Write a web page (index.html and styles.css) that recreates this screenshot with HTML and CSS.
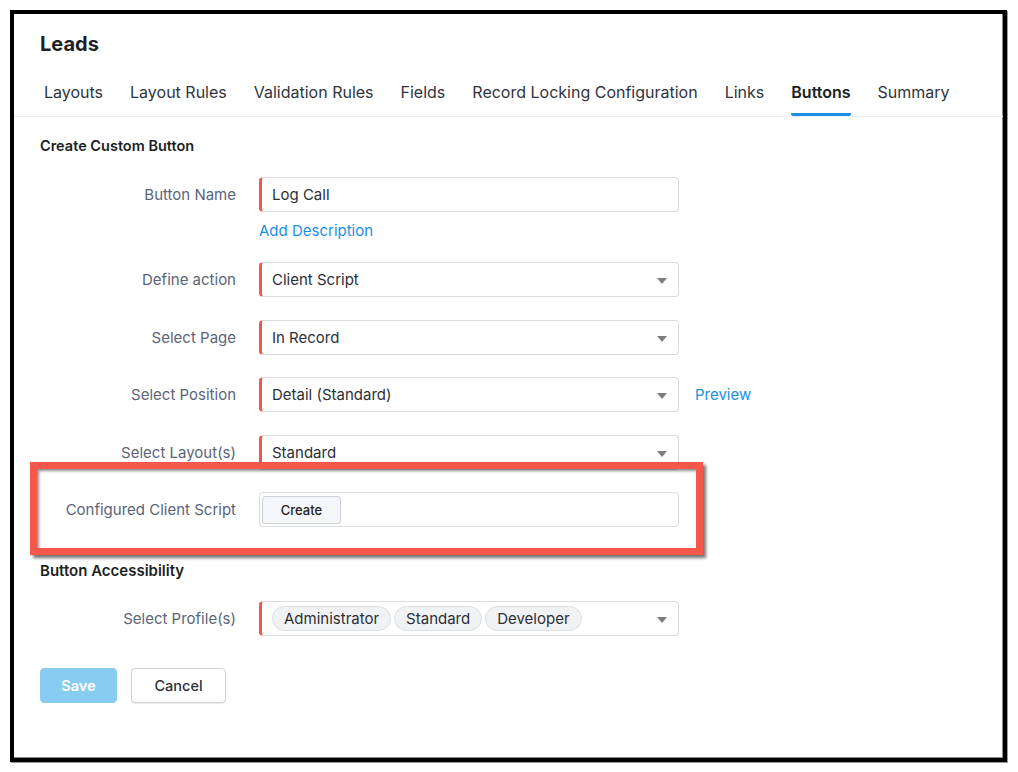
FILE: index.html
```html
<!DOCTYPE html>
<html lang="en">
<head>
    <meta charset="UTF-8">
    <title>Leads - Buttons</title>
    <link rel="stylesheet" href="styles.css">
</head>
<body>
<div class="frame">
    <h1 class="title">Leads</h1>
    <div class="tabs">
        <span class="tab">Layouts</span>
        <span class="tab">Layout Rules</span>
        <span class="tab">Validation Rules</span>
        <span class="tab">Fields</span>
        <span class="tab">Record Locking Configuration</span>
        <span class="tab">Links</span>
        <span class="tab active">Buttons</span>
        <span class="tab">Summary</span>
    </div>

    <div class="content">
        <h2 class="section-title">Create Custom Button</h2>

        <div class="row first">
            <label class="label">Button Name</label>
            <div class="field">
                <div class="input required">Log Call</div>
                <a class="link add-desc">Add Description</a>
            </div>
        </div>

        <div class="row">
            <label class="label">Define action</label>
            <div class="input required select">Client Script<span class="caret"></span></div>
        </div>

        <div class="row">
            <label class="label">Select Page</label>
            <div class="input required select">In Record<span class="caret"></span></div>
        </div>

        <div class="row">
            <label class="label">Select Position</label>
            <div class="input required select">Detail (Standard)<span class="caret"></span></div>
            <a class="link preview">Preview</a>
        </div>

        <div class="row">
            <label class="label">Select Layout(s)</label>
            <div class="input required select">Standard<span class="caret"></span></div>
        </div>

        <div class="row highlighted">
            <label class="label">Configured Client Script</label>
            <div class="input plain">
                <button class="btn-create">Create</button>
            </div>
            <div class="callout"></div>
        </div>

        <h2 class="section-title access">Button Accessibility</h2>

        <div class="row">
            <label class="label">Select Profile(s)</label>
            <div class="input required select chips">
                <span class="chip">Administrator</span>
                <span class="chip">Standard</span>
                <span class="chip">Developer</span>
                <span class="caret"></span>
            </div>
        </div>

        <div class="actions">
            <button class="btn save">Save</button>
            <button class="btn cancel">Cancel</button>
        </div>
    </div>
</div>
</body>
</html>
```

FILE: styles.css
```css
html, body {
    margin: 0;
    background: #ffffff;
    font-family: Inter, "Noto Sans", sans-serif;
}
.frame {
    margin: 10px;
    width: 997px;
    height: 752px;
    box-sizing: border-box;
    border: 4px solid #000;
    box-shadow: inset -1px -1px 0 #8a8a8a, 1px 1px 0 #9a9a9a;
    padding-top: 16px;
    overflow: hidden;
}
.title {
    margin: 0 0 24px 26px;
    font-size: 20px;
    line-height: 28px;
    font-weight: 700;
    color: #1d1f24;
}
.tabs {
    display: flex;
    gap: 27px;
    padding-left: 30px;
    border-bottom: 1px solid #eceef1;
}
.tab {
    font-size: 16px;
    line-height: 20px;
    color: #2f3440;
    padding-bottom: 11px;
    border-bottom: 3px solid transparent;
}
.tab.active {
    color: #1b1d22;
    font-weight: 600;
    border-bottom-color: #1a8fe3;
    border-radius: 2px;
}
.content {
    padding: 19px 26px 0;
}
.section-title {
    margin: 0 0 21px;
    font-size: 14.5px;
    line-height: 20px;
    font-weight: 600;
    color: #1d1f24;
}
.section-title.access {
    margin: 34px 0 20px;
    font-size: 15px;
}
.row {
    display: flex;
    align-items: center;
    margin-bottom: 22.5px;
}
.row.first {
    align-items: flex-start;
    margin-bottom: 21px;
}
.row.first .label {
    line-height: 35px;
}
.label {
    width: 196px;
    margin-right: 23px;
    text-align: right;
    font-size: 15px;
    color: #5b6479;
    flex-shrink: 0;
}
.field {
    display: flex;
    flex-direction: column;
}
.input {
    width: 420px;
    height: 35px;
    box-sizing: border-box;
    border: 1px solid #d8dadf;
    border-radius: 4px;
    display: flex;
    align-items: center;
    padding-left: 12px;
    font-size: 15px;
    color: #2c2f36;
    position: relative;
}
.input.required {
    border-left: 3px solid #f2574c;
    padding-left: 10px;
}
.input.plain {
    padding-left: 2px;
}
.caret {
    position: absolute;
    right: 11px;
    top: 15px;
    width: 0;
    height: 0;
    border-left: 5px solid transparent;
    border-right: 5px solid transparent;
    border-top: 6px solid #7b7d82;
}
.link {
    color: #1a8fe3;
    font-size: 15px;
    line-height: 20px;
    cursor: pointer;
}
.add-desc {
    margin-top: 9px;
}
.preview {
    margin-left: 16px;
}
.btn-create {
    height: 28px;
    width: 79px;
    font-family: inherit;
    font-size: 13px;
    font-weight: 500;
    color: #1f2126;
    background: #f5f6f9;
    border: 1px solid #cdd0d6;
    border-radius: 3px;
}
.highlighted {
    position: relative;
}
.callout {
    position: absolute;
    left: -10px;
    top: -30px;
    width: 673px;
    height: 93px;
    box-sizing: border-box;
    border: 7px solid #f5584a;
    box-shadow: 3px 3px 3px rgba(0, 0, 0, 0.55), inset 2px 2px 3px rgba(0, 0, 0, 0.45);
    pointer-events: none;
}
.chips {
    padding-left: 11px;
}
.chip {
    height: 25px;
    box-sizing: border-box;
    border: 1px solid #dcdee2;
    background: #f1f2f4;
    border-radius: 13px;
    padding: 0 11px;
    margin-right: 3px;
    display: flex;
    align-items: center;
    font-size: 15px;
    color: #2c2f36;
}
.actions {
    display: flex;
    gap: 14px;
    margin-top: 32px;
}
.btn {
    height: 35px;
    font-family: inherit;
    font-size: 14.5px;
    border-radius: 4px;
}
.btn.save {
    width: 77px;
    background: #88cdf1;
    border: 1px solid #88cdf1;
    color: #fff;
    font-weight: 600;
}
.btn.cancel {
    width: 95px;
    background: #fff;
    border: 1px solid #cfd2d8;
    color: #2c2f36;
    font-weight: 500;
    box-shadow: 0 1px 1px rgba(0, 0, 0, 0.08);
}
```
